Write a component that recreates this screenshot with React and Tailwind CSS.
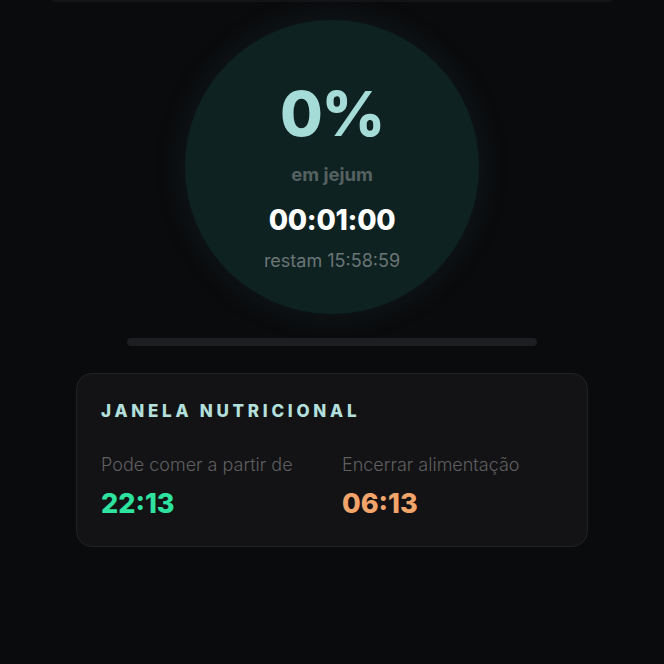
import React from 'react';

const FONT = "font-['Inter','Noto_Sans',sans-serif]";

const App = () => {
  const elapsed = '00:01:00';
  const remaining = '15:58:59';

  return (
    <div className={`min-h-[664px] w-full bg-[#0a0b0d] ${FONT} relative overflow-hidden`}>
      {/* remnant of card above */}
      <div className="absolute top-0 left-[52px] right-[52px] h-[2px] bg-[#131417]" />

      <div className="flex flex-col items-center pt-[20px]">
        {/* Progress ring */}
        <div className="w-[294px] h-[294px] rounded-full bg-[#0f2222] shadow-[0_0_24px_6px_rgba(40,70,70,0.18)] flex flex-col items-center">
          <div className="mt-[63px] text-[62px] leading-none font-extrabold tracking-[-0.02em] text-[#a6dcd8]">0%</div>
          <div className="mt-[20px] text-[18.5px] leading-none font-bold text-[#566161]">em jejum</div>
          <div className="mt-[22px] text-[28px] leading-none font-extrabold text-white tracking-[-0.01em]">{elapsed}</div>
          <div className="mt-[18px] text-[18px] leading-none text-[#6a7575]">restam {remaining}</div>
        </div>

        {/* progress bar */}
        <div className="mt-[24px] w-[410px] h-[8px] rounded-full bg-[#1d1e21]" />

        {/* Nutrition window card */}
        <div className="mt-[27px] w-[512px] h-[174px] rounded-[16px] bg-[#131315] border border-[#222326] px-[24px] pt-[29px]">
          <h3 className="text-[17px] leading-none font-extrabold tracking-[0.22em] text-[#b3e0dc]">JANELA NUTRICIONAL</h3>
          <div className="mt-[36px] grid grid-cols-[241px_1fr]">
            <div>
              <p className="text-[18px] leading-none font-light text-[#5f5f61]">Pode comer a partir de</p>
              <p className="mt-[16px] text-[27px] leading-none font-extrabold text-[#2ee39f]">22:13</p>
            </div>
            <div>
              <p className="text-[18px] leading-none font-light text-[#5f5f61]">Encerrar alimentação</p>
              <p className="mt-[16px] text-[27px] leading-none font-extrabold text-[#f2a56b]">06:13</p>
            </div>
          </div>
        </div>
      </div>
    </div>
  );
};

export default App;
